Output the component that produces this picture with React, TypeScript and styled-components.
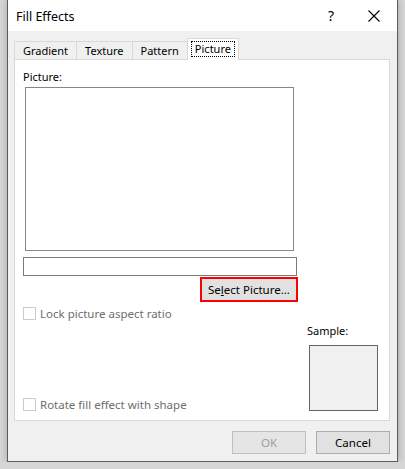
import React from 'react';
import styled, { createGlobalStyle } from 'styled-components';

const GlobalStyle = createGlobalStyle`
  html, body {
    margin: 0;
    padding: 0;
    background: #d6d6d6;
  }
  body {
    font-family: 'Noto Sans', 'Liberation Sans', sans-serif;
    font-size: 11px;
    color: #000;
  }
`;

const tabs = ['Gradient', 'Texture', 'Pattern', 'Picture'];

const App = () => {
  return (
    <>
      <GlobalStyle />
      <Window>
        <TitleBar>
          <Title>Fill Effects</Title>
          <HelpButton>?</HelpButton>
          <CloseButton>
            <svg width="12" height="12" viewBox="0 0 12 12">
              <path d="M0.5 0.5 L11.5 11.5 M11.5 0.5 L0.5 11.5" stroke="#000" strokeWidth="1.1" fill="none" />
            </svg>
          </CloseButton>
        </TitleBar>
        <Body>
          <TabStrip>
            {tabs.map((t) => (
              <Tab key={t} active={t === 'Picture'}>
                {t === 'Picture' ? <Focus>{t}</Focus> : t}
              </Tab>
            ))}
          </TabStrip>
          <Panel>
            <Label>Picture:</Label>
            <PictureBox />
            <FileField />
            <ButtonRow>
              <SelectButton>
                Se<u>l</u>ect Picture...
              </SelectButton>
            </ButtonRow>
            <CheckRow>
              <CheckBox />
              <CheckText>Lock picture aspect ratio</CheckText>
            </CheckRow>
            <BottomRow>
              <CheckRow>
                <CheckBox />
                <CheckText>Rotate fill effect with shape</CheckText>
              </CheckRow>
              <SampleBlock>
                <Label>Sample:</Label>
                <SampleBox />
              </SampleBlock>
            </BottomRow>
          </Panel>
          <Footer>
            <DialogButton disabled>OK</DialogButton>
            <DialogButton>Cancel</DialogButton>
          </Footer>
        </Body>
      </Window>
    </>
  );
};

export default App;

const Window = styled.div`
  margin-left: 7px;
  width: 389px;
  height: 461px;
  border: 1px solid #5c5c5c;
  border-top: none;
  background: #f0f0f0;
  box-shadow: 0 0 7px rgba(0, 0, 0, 0.25);
  display: flex;
  flex-direction: column;
`;

const TitleBar = styled.div`
  height: 31px;
  background: #fff;
  display: flex;
  align-items: center;
  padding-left: 8px;
`;

const Title = styled.div`
  flex: 1;
  font-size: 12.5px;
  padding-top: 1px;
`;

const HelpButton = styled.div`
  width: 46px;
  text-align: center;
  font-size: 14px;
  margin-right: -3px;
`;

const CloseButton = styled.div`
  width: 46px;
  height: 31px;
  display: flex;
  align-items: center;
  justify-content: center;
`;

const Body = styled.div`
  flex: 1;
  padding: 7px 7px 0 6px;
  display: flex;
  flex-direction: column;
`;

const TabStrip = styled.div`
  display: flex;
  align-items: flex-end;
  height: 22px;
  padding-left: 1px;
  position: relative;
  z-index: 1;
`;

const Tab = styled.div<{ active?: boolean }>`
  height: ${(p) => (p.active ? '22px' : '19px')};
  box-sizing: border-box;
  padding: 0 ${(p) => (p.active ? '3px' : '8px')};
  margin-left: -1px;
  border: 1px solid #d9d9d9;
  border-bottom: ${(p) => (p.active ? 'none' : '1px solid #d9d9d9')};
  background: ${(p) => (p.active ? '#fff' : '#f0f0f0')};
  display: flex;
  align-items: center;
  line-height: 16px;
`;

const Focus = styled.span`
  border: 1px dotted #000;
  padding: 0 3px;
  line-height: 14px;
  margin-top: -2px;
`;

const Panel = styled.div`
  height: 362px;
  box-sizing: border-box;
  margin-top: -1px;
  background: #fff;
  border: 1px solid #d9d9d9;
  padding: 9px 92px 9px 8px;
  display: flex;
  flex-direction: column;
`;

const Label = styled.div`
  line-height: 16px;
  height: 16px;
`;

const PictureBox = styled.div`
  margin: 2px 0 0 2px;
  width: 269px;
  height: 164px;
  box-sizing: border-box;
  border: 1px solid #828790;
`;

const FileField = styled.div`
  margin-top: 6px;
  width: 274px;
  height: 19px;
  box-sizing: border-box;
  border: 1px solid #7a7a7a;
`;

const ButtonRow = styled.div`
  width: 275px;
  display: flex;
  justify-content: flex-end;
  margin-top: 1px;
`;

const SelectButton = styled.div`
  width: 98px;
  height: 25px;
  box-sizing: border-box;
  border: 2px solid #f00;
  background: #e1e1e1;
  display: flex;
  align-items: center;
  justify-content: center;
  padding-bottom: 1px;
  font-size: 11.5px;
`;

const CheckRow = styled.div`
  display: flex;
  align-items: center;
  margin-top: 5px;
  height: 13px;
`;

const CheckBox = styled.div`
  width: 13px;
  height: 13px;
  box-sizing: border-box;
  border: 1px solid #cccccc;
  background: #fff;
  margin-right: 4px;
`;

const CheckText = styled.span`
  color: #6d6d6d;
  line-height: 14px;
  font-size: 11.5px;
`;

const BottomRow = styled.div`
  flex: 1;
  display: flex;
  align-items: flex-end;
  justify-content: space-between;
  margin-right: -81px;
`;

const SampleBlock = styled.div`
  display: flex;
  flex-direction: column;
  align-items: flex-start;
`;

const SampleBox = styled.div`
  margin: 6px 0 0 2px;
  width: 69px;
  height: 66px;
  box-sizing: border-box;
  border: 1px solid #646464;
  background: #f0f0f0;
`;

const Footer = styled.div`
  display: flex;
  justify-content: flex-end;
  gap: 10px;
  margin-top: 10px;
`;

const DialogButton = styled.div<{ disabled?: boolean }>`
  width: 74px;
  height: 23px;
  box-sizing: border-box;
  border: 1px solid ${(p) => (p.disabled ? '#bfbfbf' : '#adadad')};
  background: ${(p) => (p.disabled ? '#e5e5e5' : '#e1e1e1')};
  color: ${(p) => (p.disabled ? '#a0a0a0' : '#000')};
  display: flex;
  align-items: center;
  justify-content: center;
  font-size: 11.5px;
`;
